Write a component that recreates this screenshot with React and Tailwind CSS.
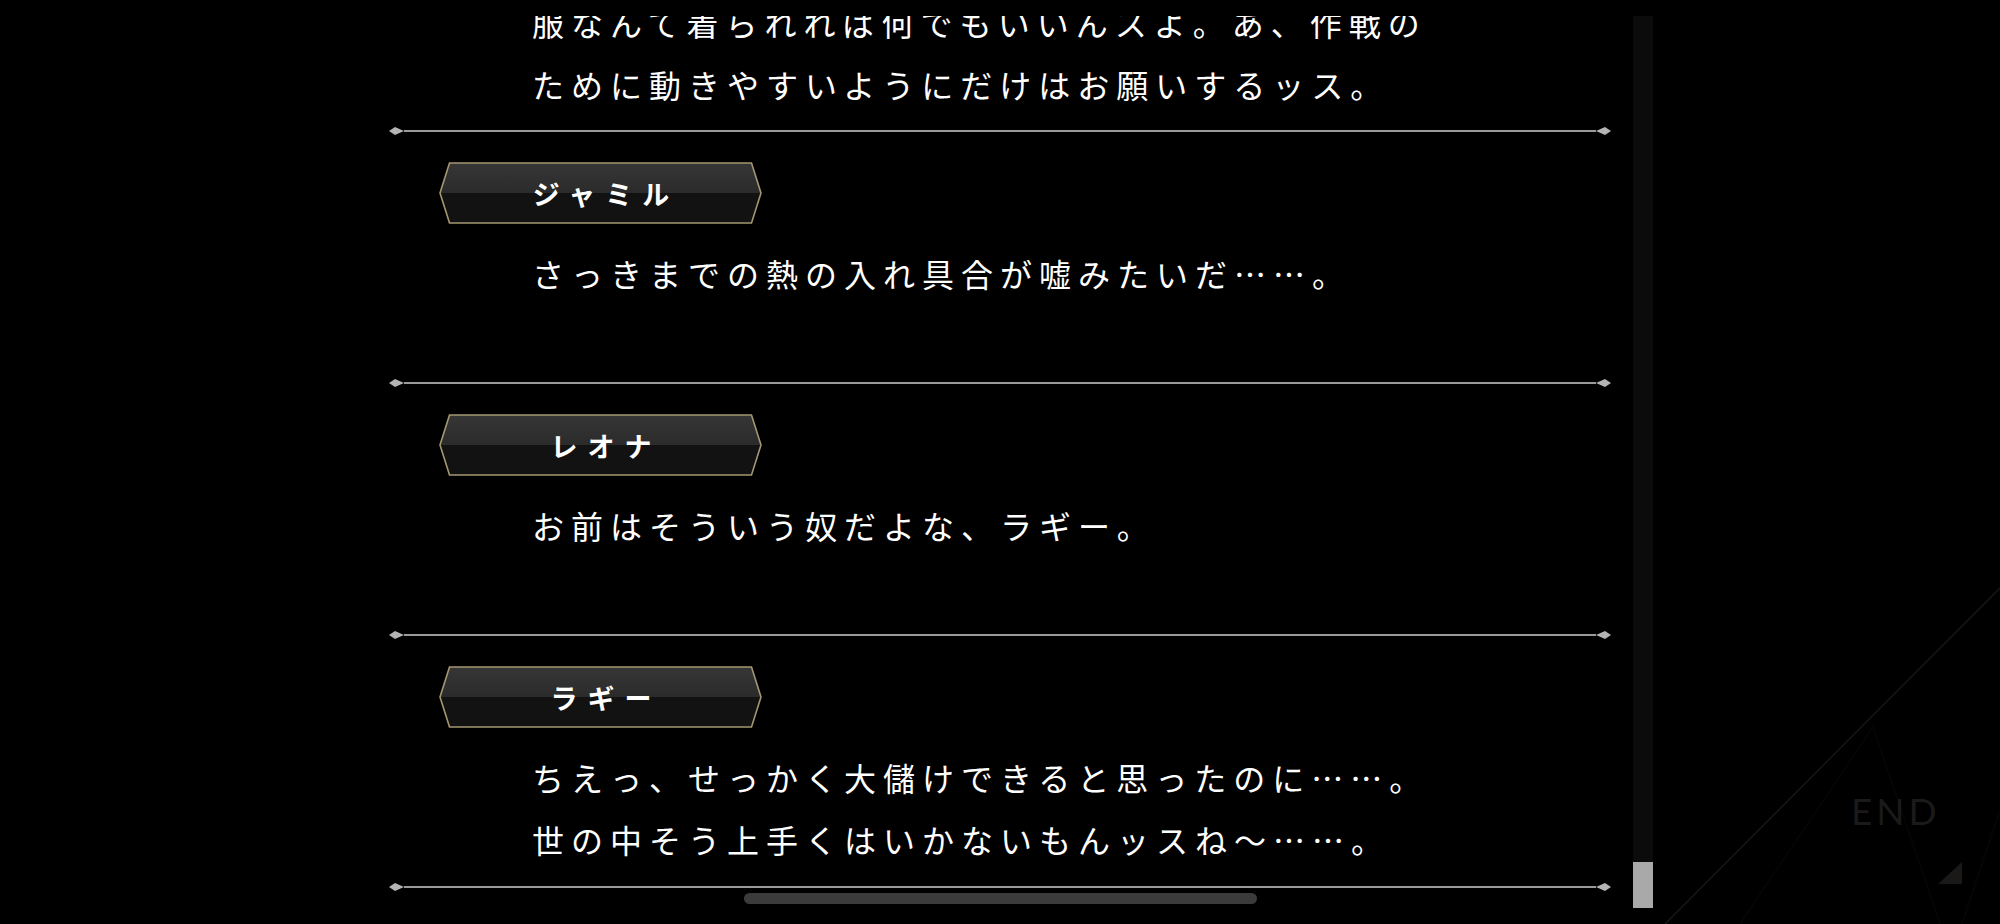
import React from "react";

const JP = { fontFamily: '"Noto Sans CJK JP", "Noto Sans", sans-serif' };

function Diamond() {
  return (
    <svg width="15" height="10" viewBox="0 0 15 10" className="shrink-0">
      <polygon points="0,5 6,1 15,5 6,9" fill="#b4b4b4" />
    </svg>
  );
}

function DiamondR() {
  return (
    <svg width="15" height="10" viewBox="0 0 15 10" className="shrink-0">
      <polygon points="0,5 9,1 15,5 9,9" fill="#b4b4b4" />
    </svg>
  );
}

function Divider() {
  return (
    <div className="flex h-[10px] shrink-0 items-center">
      <Diamond />
      <div className="h-[2px] flex-1 bg-[#9a9a9a]" />
      <DiamondR />
    </div>
  );
}

function NamePlate({ name }) {
  return (
    <div className="relative ml-[50px] flex h-[62px] w-[323px] items-center justify-center">
      <svg
        className="absolute inset-0"
        width="323"
        height="62"
        viewBox="0 0 323 62"
      >
        <defs>
          <linearGradient id="plTop" x1="0" y1="0" x2="0" y2="1">
            <stop offset="0" stopColor="#363636" />
            <stop offset="1" stopColor="#2b2b2b" />
          </linearGradient>
        </defs>
        <polygon points="10.5,1 312.5,1 322,31 1,31" fill="url(#plTop)" />
        <polygon points="1,31 322,31 312.5,61 10.5,61" fill="#121212" />
        <polygon
          points="10.5,1 312.5,1 322,31 312.5,61 10.5,61 1,31"
          fill="none"
          stroke="#a49772"
          strokeWidth="1.6"
        />
      </svg>
      <span
        className="relative pl-[11px] text-[27px] font-semibold leading-none tracking-[10px] text-white"
        style={JP}
      >
        {name}
      </span>
    </div>
  );
}

function Lines({ lines }) {
  return (
    <div
      className="pl-[143px] text-[32px] leading-[62px] tracking-[7px] whitespace-nowrap text-white"
      style={JP}
    >
      {lines.map((l, i) => (
        <div key={i}>{l}</div>
      ))}
    </div>
  );
}

function Section({ name, lines }) {
  return (
    <div className="flex h-[242px] shrink-0 flex-col pt-[26px]">
      <NamePlate name={name} />
      <div className="mt-[18px]">
        <Lines lines={lines} />
      </div>
    </div>
  );
}

export default function App() {
  return (
    <div className="relative h-[924px] w-[2000px] overflow-hidden bg-black">
      <div className="flex h-[924px] pl-[389px]">
        <div className="mt-[16px] h-[908px] w-[1222px] overflow-hidden">
          <div className="-mt-[16px] flex flex-col">
            <div className="flex h-[126px] shrink-0 flex-col">
              <div className="-mt-[9px]">
                <Lines
                  lines={[
                    "服なんて着られれば何でもいいんスよ。あ、作戦の",
                    "ために動きやすいようにだけはお願いするッス。",
                  ]}
                />
              </div>
            </div>
            <Divider />
            <Section
              name="ジャミル"
              lines={["さっきまでの熱の入れ具合が嘘みたいだ……。"]}
            />
            <Divider />
            <Section name="レオナ" lines={["お前はそういう奴だよな、ラギー。"]} />
            <Divider />
            <Section
              name="ラギー"
              lines={[
                "ちえっ、せっかく大儲けできると思ったのに……。",
                "世の中そう上手くはいかないもんッスね～……。",
              ]}
            />
            <Divider />
          </div>
        </div>
        <div className="ml-[22px] mt-[16px] flex h-[892px] w-[20px] flex-col justify-end bg-[#0b0b0b]">
          <div className="h-[46px] w-[20px] bg-[#a9a9a9]" />
        </div>
      </div>

      {/* END decoration */}
      <svg
        className="pointer-events-none absolute left-[1640px] top-[560px]"
        width="360"
        height="364"
        viewBox="0 0 360 364"
      >
        <line x1="25" y1="364" x2="360" y2="28" stroke="#161616" strokeWidth="1.5" />
        <polyline points="100,364 233,167 300,364" fill="none" stroke="#060606" strokeWidth="1.5" />
        <line x1="322" y1="364" x2="360" y2="250" stroke="#060606" strokeWidth="1.5" />
        <polygon points="322,302 322,324 298,324" fill="#1b1917" />
      </svg>
      <div
        className="pointer-events-none absolute left-[1851px] top-[788px] text-[37px] leading-[46px] tracking-[4px] text-[#1a1a1a]"
        style={{ fontFamily: '"Lato", "Open Sans", sans-serif' }}
      >
        END
      </div>

      {/* bottom horizontal indicator */}
      <div className="pointer-events-none absolute left-[744px] top-[893px] h-[11px] w-[513px] rounded-full bg-[#3b3b3b]" />
    </div>
  );
}
